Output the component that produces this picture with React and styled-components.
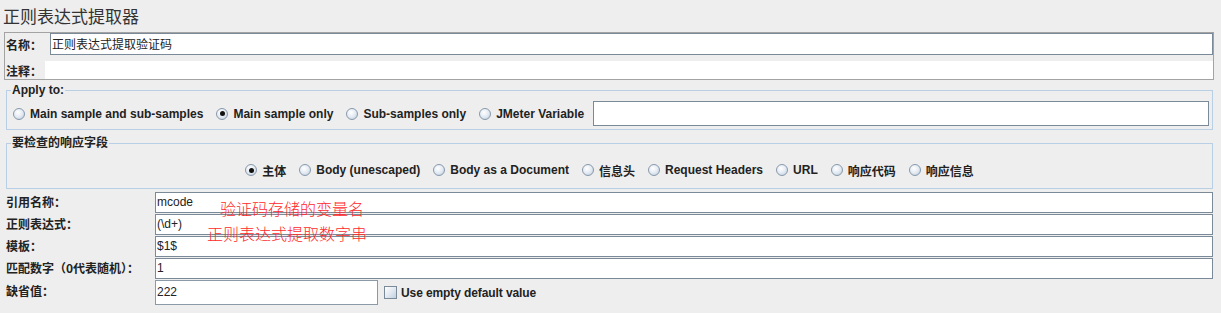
import React from "react";
import styled, { createGlobalStyle } from "styled-components";

const GlobalStyle = createGlobalStyle`
  html, body {
    margin: 0;
    padding: 0;
    background: #eeeeee;
  }
  body {
    font-family: "Liberation Sans", "Noto Sans CJK SC", sans-serif;
    font-size: 12px;
    color: #333333;
  }
`;

const Page = styled.div`
  width: 1221px;
  height: 313px;
  overflow: hidden;
  background: #eeeeee;
  display: flex;
  flex-direction: column;
`;

const Title = styled.div`
  padding: 4px 3px;
  height: 24px;
  line-height: 24px;
  font-size: 17px;
  color: #333333;
  font-family: "Noto Sans CJK SC", sans-serif;
`;

const NamePanel = styled.div`
  margin: 0 7px 0 4px;
  border: 1px solid #a3a3a3;
  display: flex;
  flex-direction: column;
`;

const NameRow = styled.div`
  display: flex;
  align-items: stretch;
  height: 22px;
`;

const CommentRow = styled.div`
  display: flex;
  align-items: stretch;
  height: 18px;
  margin-top: 6px;
`;

const Label = styled.label`
  flex-shrink: 0;
  width: ${(p) => p.$w || 150}px;
  padding-left: 1px;
  padding-bottom: ${(p) => p.$lift || 0}px;
  box-sizing: border-box;
  display: flex;
  align-items: center;
  font-family: "Noto Sans CJK SC", sans-serif;
  font-weight: bold;
  font-size: 12px;
  color: #222222;
  white-space: nowrap;
`;

const TextField = styled.div`
  flex: ${(p) => (p.$w ? "none" : "1")};
  width: ${(p) => (p.$w ? `${p.$w}px` : "auto")};
  height: ${(p) => p.$h || 21}px;
  box-sizing: border-box;
  background: #ffffff;
  border: 1px solid ${(p) => (p.$light ? "#8c9aa8" : "#7a8a99")};
  padding: 0 2px 1px 1px;
  display: flex;
  align-items: center;
  font-size: 12px;
  color: #222222;
  white-space: nowrap;
`;

const Area = styled.div`
  flex: 1;
  background: #ffffff;
`;

const Group = styled.fieldset`
  margin: ${(p) => p.$top}px 8px 0 6px;
  border: 1px solid #b8cfe5;
  padding: ${(p) => p.$pad};
  min-width: 0;
`;

const Legend = styled.legend`
  margin-left: 4px;
  padding: 0 1px;
  font-weight: bold;
  font-size: 12px;
  line-height: 14px;
  color: #222222;
  font-family: "Liberation Sans", "Noto Sans CJK SC", sans-serif;
`;

const RadioRow = styled.div`
  display: flex;
  align-items: center;
  justify-content: ${(p) => (p.$center ? "center" : "flex-start")};
  gap: 13px;
  height: ${(p) => p.$h}px;
  padding: 0 ${(p) => p.$right || 0}px 0 ${(p) => p.$left || 0}px;
`;

const Option = styled.span`
  display: inline-flex;
  align-items: center;
  gap: 5px;
  font-weight: bold;
  font-size: 12px;
  color: #222222;
  white-space: nowrap;
`;

const RadioDot = styled.span`
  width: 12px;
  height: 12px;
  border-radius: 50%;
  box-sizing: border-box;
  border: 1px solid #8899aa;
  background: radial-gradient(circle at 40% 35%, #ffffff 0%, #e4ebf3 50%, #b9c8d8 100%);
  display: inline-flex;
  align-items: center;
  justify-content: center;
  flex-shrink: 0;

  &::after {
    content: "";
    width: 5px;
    height: 5px;
    border-radius: 50%;
    background: #111111;
    display: ${(p) => (p.$on ? "block" : "none")};
  }
`;

const CheckBox = styled.span`
  width: 13px;
  height: 13px;
  box-sizing: border-box;
  border: 1px solid #7a8a99;
  background: linear-gradient(135deg, #ffffff 0%, #dfe7f0 55%, #c3d0de 100%);
  flex-shrink: 0;
`;

const Form = styled.div`
  position: relative;
  margin: 3px 8px 0 5px;
  display: grid;
  grid-template-columns: 150px 1fr;
  grid-template-rows: 22px 22px 22px 22px 25px;
`;

const Cell = styled.div`
  display: flex;
  align-items: flex-start;
  gap: 6px;
`;

const Note = styled.div`
  position: absolute;
  left: ${(p) => p.$x}px;
  top: ${(p) => p.$y}px;
  color: #ff2a2a;
  font-family: "Noto Sans CJK SC", sans-serif;
  font-weight: 300;
  font-size: 16px;
  line-height: 18px;
  white-space: nowrap;
  pointer-events: none;
`;

const CheckLabel = styled.span`
  display: inline-flex;
  align-items: center;
  gap: 4px;
  height: 25px;
  font-weight: bold;
  font-size: 12px;
  letter-spacing: -0.1px;
  color: #222222;
`;

const applyOptions = [
  { label: "Main sample and sub-samples" },
  { label: "Main sample only", on: true },
  { label: "Sub-samples only" },
  { label: "JMeter Variable" },
];

const fieldOptions = [
  { label: "主体", on: true },
  { label: "Body (unescaped)" },
  { label: "Body as a Document" },
  { label: "信息头" },
  { label: "Request Headers" },
  { label: "URL" },
  { label: "响应代码" },
  { label: "响应信息" },
];

const rows = [
  { label: "引用名称：", value: "mcode" },
  { label: "正则表达式：", value: "(\\d+)" },
  { label: "模板：", value: "$1$" },
  { label: "匹配数字（0代表随机）：", value: "1" },
];

const Radio = ({ label, on }) => (
  <Option>
    <RadioDot $on={on} />
    {label}
  </Option>
);

export default function App() {
  return (
    <Page>
      <GlobalStyle />
      <Title>正则表达式提取器</Title>

      <NamePanel>
        <NameRow>
          <Label $w={45}>名称：</Label>
          <TextField $h={22}>正则表达式提取验证码</TextField>
        </NameRow>
        <CommentRow>
          <Label $w={40}>注释：</Label>
          <Area />
        </CommentRow>
      </NamePanel>

      <Group $top={3} $pad="4px 0 3px 0">
        <Legend>Apply to:</Legend>
        <RadioRow $h={25} $left={6} $right={3}>
          {applyOptions.map((o) => (
            <Radio key={o.label} {...o} />
          ))}
          <TextField $h={25} style={{ marginLeft: -4 }} />
        </RadioRow>
      </Group>

      <Group $top={6} $pad="12px 0 10px 0">
        <Legend>要检查的响应字段</Legend>
        <RadioRow $h={16} $center>
          {fieldOptions.map((o) => (
            <Radio key={o.label} {...o} />
          ))}
        </RadioRow>
      </Group>

      <Form>
        {rows.map((r) => (
          <React.Fragment key={r.label}>
            <Label $lift={3}>{r.label}</Label>
            <Cell>
              <TextField>{r.value}</TextField>
            </Cell>
          </React.Fragment>
        ))}
        <Label $lift={5}>缺省值：</Label>
        <Cell>
          <TextField $w={223} $h={25} $light>222</TextField>
          <CheckLabel>
            <CheckBox />
            Use empty default value
          </CheckLabel>
        </Cell>
        <Note $x={215} $y={7}>验证码存储的变量名</Note>
        <Note $x={202} $y={32}>正则表达式提取数字串</Note>
      </Form>
    </Page>
  );
}
